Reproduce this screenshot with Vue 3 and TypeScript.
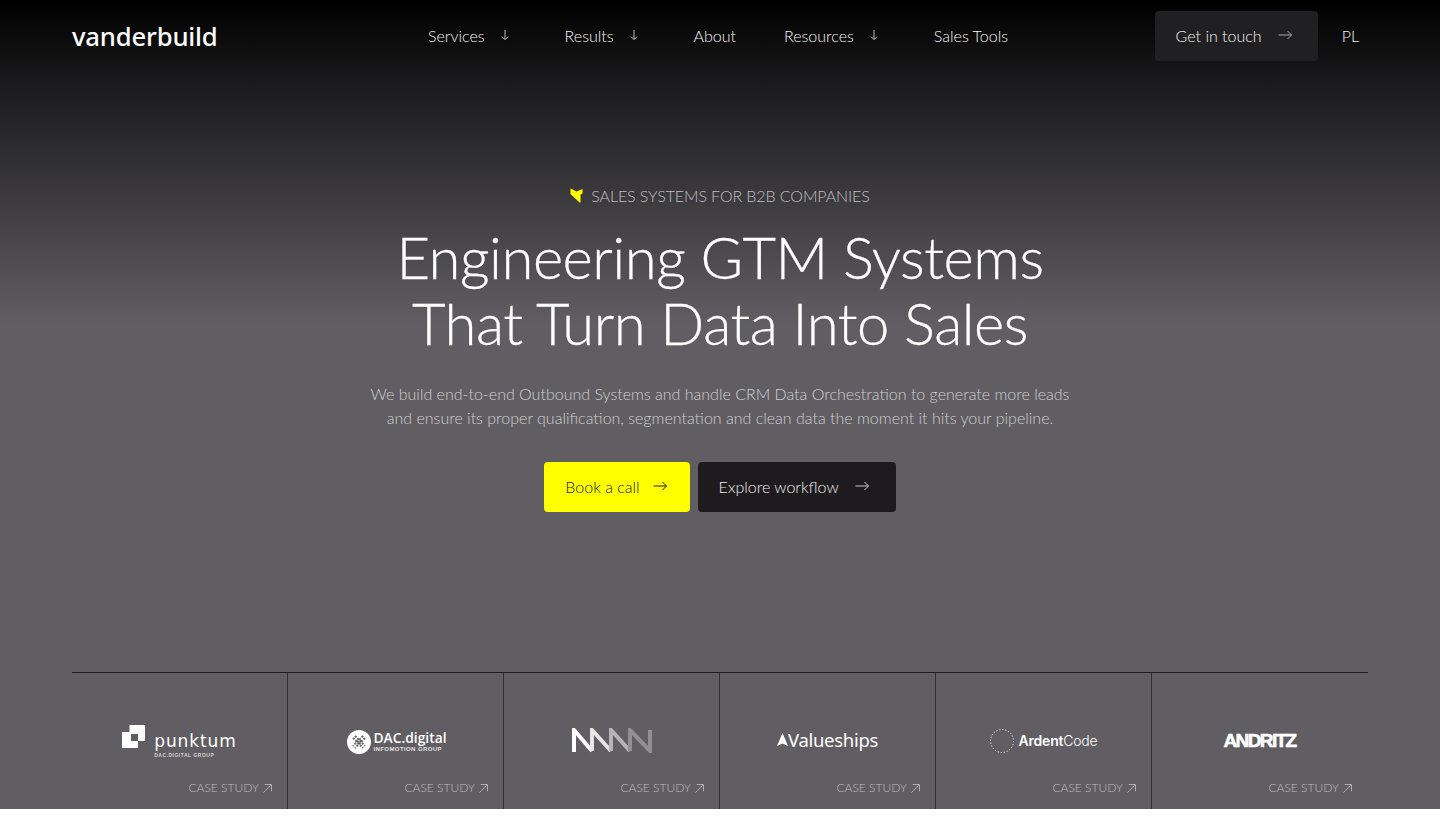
<script setup lang="ts">
interface Client { id: string; name: string }
const clients: Client[] = [
  { id: 'punktum', name: 'punktum' },
  { id: 'dac', name: 'DAC.digital' },
  { id: 'nnnn', name: 'Northwave' },
  { id: 'value', name: 'Valueships' },
  { id: 'ardent', name: 'ArdentCode' },
  { id: 'andritz', name: 'ANDRITZ' },
]
const nav = [
  { label: 'Services', drop: true },
  { label: 'Results', drop: true },
  { label: 'About', drop: false },
  { label: 'Resources', drop: true },
  { label: 'Sales Tools', drop: false },
]
</script>

<template>
  <div class="hero">
    <header class="bar">
      <a class="brand">vanderbuild</a>
      <nav class="links">
        <a v-for="n in nav" :key="n.label" class="link" :class="{ drop: n.drop }">
          <span>{{ n.label }}</span>
          <svg v-if="n.drop" class="down" width="10" height="12" viewBox="0 0 10 12" fill="none" stroke="currentColor" stroke-width="1">
            <path d="M5 1v9.5M2 7.6l3 3 3-3" />
          </svg>
        </a>
      </nav>
      <div class="side">
        <a class="btn btn-nav">Get in touch
          <svg class="arr" width="15" height="10" viewBox="0 0 15 10" fill="none" stroke="currentColor" stroke-width="1"><path d="M0.5 5h13M9.5 1l4 4-4 4" /></svg>
        </a>
        <a class="lang">PL</a>
      </div>
    </header>

    <main class="copy">
      <p class="eyebrow">
        <svg width="13" height="15" viewBox="0 0 13 15"><path fill="#ffff00" d="M0.500 0.500 L6.500 3.500 L12.500 1 V5.500 L10.500 6.500 V14.500 H9.500 L0.500 6 Z" /></svg>
        <span>SALES SYSTEMS FOR B2B COMPANIES</span>
      </p>
      <h1>Engineering GTM Systems<br />That Turn Data Into Sales</h1>
      <p class="lead">We build end-to-end Outbound Systems and handle CRM Data Orchestration to generate more leads<br />and ensure its proper qualification, segmentation and clean data the moment it hits your pipeline.</p>
      <div class="cta">
        <a class="btn btn-yellow">Book a call
          <svg class="arr" width="15" height="10" viewBox="0 0 15 10" fill="none" stroke="currentColor" stroke-width="1"><path d="M0.5 5h13M9.5 1l4 4-4 4" /></svg>
        </a>
        <a class="btn btn-dark">Explore workflow
          <svg class="arr" width="15" height="10" viewBox="0 0 15 10" fill="none" stroke="currentColor" stroke-width="1"><path d="M0.5 5h13M9.5 1l4 4-4 4" /></svg>
        </a>
      </div>
    </main>

    <section class="strip">
      <article v-for="c in clients" :key="c.id" class="cell">
        <div class="logo">
          <div v-if="c.id === 'punktum'" class="lg-punktum">
            <svg width="23" height="23" viewBox="0 0 23 23" fill="#fff"><path d="M0 7h16v16H0zM7.500 0H23v16h-7V7H7.500z" /><path d="M9 9h7v7H9z" fill="#605e62" /></svg>
            <div class="pk-text"><span class="pk-name">punktum</span><span class="pk-sub">DAC.DIGITAL GROUP</span></div>
          </div>
          <div v-else-if="c.id === 'dac'" class="lg-dac">
            <svg width="24" height="24" viewBox="0 0 24 24">
              <circle cx="12" cy="12" r="12" fill="#fff" />
              <g stroke="#605e62" stroke-width="2" stroke-dasharray="2 1.300" fill="none">
                <path d="M6 8l10 10M8 6l10 10M18 8L8 18M16 6L6 16" />
              </g>
            </svg>
            <div class="dac-text"><span class="dac-name">DAC.digital</span><span class="dac-sub">INFOMOTION GROUP</span></div>
          </div>
          <svg v-else-if="c.id === 'nnnn'" width="80" height="25" viewBox="0 0 80 25" fill="none" stroke-width="4" role="img" aria-label="Northwave">
            <path d="M2 24V2l18 21" stroke="#fff" />
            <path d="M20 23V2l19 21" stroke="#e6e6e7" />
            <path d="M39 23V2l19 21" stroke="#b5b4b6" />
            <path d="M58 23V2l20 21V2" stroke="#908f92" />
          </svg>
          <div v-else-if="c.id === 'value'" class="lg-value">
            <svg width="11" height="13" viewBox="0 0 11 13"><path fill="#fff" d="M5.500 0L11 13l-5.500-2.500L0 13z" /></svg>
            <span>Valueships</span>
          </div>
          <div v-else-if="c.id === 'ardent'" class="lg-ardent">
            <svg width="24" height="24" viewBox="0 0 24 24" fill="none"><circle cx="12" cy="12" r="11.500" stroke="#fff" stroke-width="0.900" stroke-dasharray="1.200 1.800" /></svg>
            <span><b>Ardent</b>Code</span>
          </div>
          <div v-else class="lg-andritz">ANDRITZ</div>
        </div>
        <a class="case">CASE STUDY
          <svg width="9" height="9" viewBox="0 0 9 9" fill="none" stroke="currentColor" stroke-width="0.900"><path d="M0.500 8.500L8.300 0.700M1.800 0.600h6.600v6.600" /></svg>
        </a>
      </article>
    </section>
  </div>
</template>

<style scoped>
.hero {
  height: 809px;
  display: flex;
  flex-direction: column;
  padding: 0 72px;
  box-sizing: border-box;
  background: linear-gradient(180deg, #000 0%, #1c1b1d 11%, #605e62 40%, #605e62 100%);
  font-family: "Lato", "Liberation Sans", sans-serif;
  font-weight: 300;
  color: #fff;
}
.bar {
  height: 72px;
  flex: none;
  display: grid;
  grid-template-columns: 1fr auto 1fr;
  align-items: center;
}
.brand {
  font-family: "Noto Sans", sans-serif;
  font-size: 25.700px;
  font-weight: 500;
  letter-spacing: -0.2px;
}
.links { display: flex; gap: 48px; margin-right: 4px; }
.link {
  display: flex;
  align-items: center;
  gap: 15px;
  font-size: 16px;
  color: #f4f4f4;
  padding-bottom: 2px;
}
.link.drop { padding-right: 7px; }
.down { color: #bdbcbe; }
.side { display: flex; align-items: center; justify-content: flex-end; gap: 24px; padding-right: 9px; }
.lang { font-size: 16px; color: #f0f0f0; padding-bottom: 2px; }
.btn {
  height: 50px;
  box-sizing: border-box;
  border-radius: 4px;
  display: flex;
  align-items: center;
  gap: 16px;
  padding: 0 25px 2px 21px;
  font-size: 16px;
}
.btn-nav { background: #201f21; color: #f4f4f4; }
.btn-nav .arr { color: #a9a8aa; }
.copy {
  flex: 1;
  display: flex;
  flex-direction: column;
  align-items: center;
  text-align: center;
  padding-top: 111px;
}
.eyebrow {
  margin: 0;
  height: 24px;
  display: flex;
  align-items: center;
  gap: 8px;
  font-size: 16px;
  letter-spacing: -0.1px;
  color: #c0bfc1;
}
h1 {
  margin: 17px 0 0;
  font-size: 58px;
  line-height: 66px;
  font-weight: 300;
  letter-spacing: -0.5px;
  -webkit-text-stroke: 0.3px #fff;
}
.lead {
  margin: 26px 0 0;
  font-size: 16px;
  line-height: 24px;
  color: #cfced0;
}
.cta { display: flex; gap: 8px; margin-top: 32px; }
.btn-yellow { background: #ff0; color: #1c1b1d; gap: 13px; padding-right: 22px; }
.btn-dark { background: #1e1b1e; color: #eee; padding-right: 26px; }
.btn-dark .arr { color: #c8c8c8; }
.strip {
  flex: none;
  height: 137px;
  display: grid;
  grid-template-columns: repeat(6, 1fr);
  border-top: 1px solid #1e1d1f;
  box-sizing: border-box;
}
.cell {
  border-right: 1px solid #302f31;
  display: flex;
  flex-direction: column;
  padding: 0 15px 13px 0;
}
.cell:last-child { border-right: none; padding-right: 16px; }
.logo {
  flex: 1;
  display: flex;
  align-items: center;
  justify-content: center;
  padding: 28px 0 0 15px;
}
.case {
  display: flex;
  justify-content: flex-end;
  align-items: center;
  gap: 4px;
  font-size: 12px;
  line-height: 16px;
  color: #bdbcbe;
}
.lg-punktum { display: flex; align-items: flex-start; gap: 9px; margin-top: 2px; }
.pk-text { display: flex; flex-direction: column; margin-top: 8px; }
.pk-name { font-family: "DejaVu Sans", sans-serif; font-size: 17px; line-height: 17px; font-weight: 400; letter-spacing: 0.9px; }
.pk-sub { font-family: "Liberation Sans", sans-serif; font-size: 5px; line-height: 7px; margin-top: 2px; letter-spacing: 0.5px; font-weight: 700; color: #d0d0d0; }
.lg-dac { display: flex; align-items: center; gap: 3px; margin-top: 3px; margin-left: 2px; }
.dac-text { display: flex; flex-direction: column; }
.dac-name { font-family: "Open Sans", sans-serif; font-size: 13.800px; line-height: 15px; font-weight: 600; }
.dac-sub { font-family: "Liberation Sans", sans-serif; font-size: 6px; line-height: 9px; font-weight: 700; letter-spacing: 0.4px; color: #e0e0e0; }
.lg-value { display: flex; align-items: center; gap: 0; font-family: "Noto Sans", sans-serif; font-size: 18.500px; letter-spacing: -0.3px; font-weight: 400; margin-top: -2px; }
.lg-ardent { display: flex; align-items: center; gap: 5px; font-family: "Inter", sans-serif; font-size: 14px; letter-spacing: -0.2px; font-weight: 300; }
.lg-ardent b { font-weight: 600; }
.lg-andritz { font-family: "Liberation Sans", sans-serif; font-weight: 700; font-size: 19px; letter-spacing: -1.600px; -webkit-text-stroke: 0.6px #fff; }
</style>

<style>
body { background: #fff; }
</style>
